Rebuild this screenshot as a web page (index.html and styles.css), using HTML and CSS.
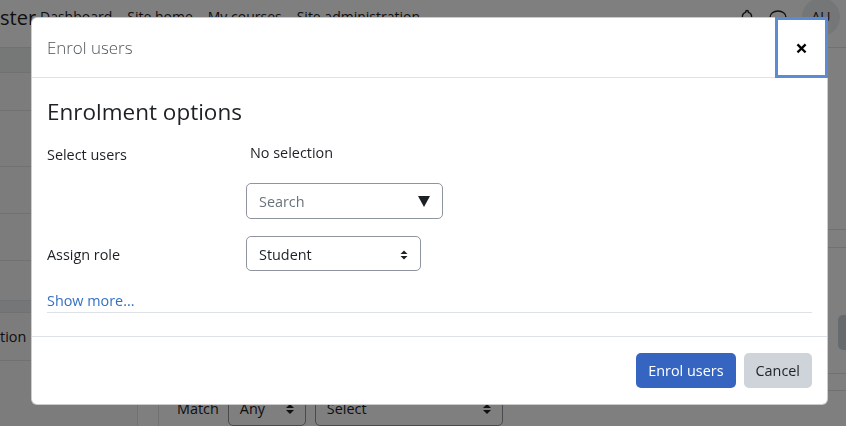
FILE: index.html
```html
<!DOCTYPE html>
<html lang="en">
<head>
<meta charset="utf-8">
<title>Enrol users</title>
<link rel="stylesheet" href="styles.css">
</head>
<body>
<div class="page">
  <header class="navbar">
    <span class="brand">ster</span>
    <nav class="primary-nav">
      <a href="#">Dashboard</a>
      <a href="#">Site home</a>
      <a href="#">My courses</a>
      <a href="#">Site administration</a>
    </nav>
    <div class="nav-icons">
      <svg class="nav-icon" width="14" height="18" viewBox="0 0 14 18"><path d="M7 1.5a1.3 1.3 0 0 1 1.3 1.3v.5A4.6 4.6 0 0 1 11.6 7.8v4l1.6 2.2H.8l1.6-2.2v-4A4.6 4.6 0 0 1 5.7 3.3v-.5A1.3 1.3 0 0 1 7 1.5z" fill="none" stroke="#1d2125" stroke-width="1.4"/></svg>
      <svg class="nav-icon" width="20" height="18" viewBox="0 0 20 18"><path d="M10 2c4.4 0 8 2.7 8 6.2s-3.6 6.2-8 6.2c-1 0-2-.1-2.9-.4L3 16l1.2-3.5C2.8 11.4 2 9.9 2 8.2 2 4.7 5.6 2 10 2z" fill="none" stroke="#1d2125" stroke-width="1.4"/></svg>
      <span class="avatar">AU</span>
    </div>
  </header>
  <div class="page-body">
    <aside class="drawer">
      <div class="drow r1"></div>
      <div class="drow r2"></div>
      <div class="drow r3"></div>
      <div class="drow r4"></div>
      <div class="drow r5"></div>
      <div class="drow r6"></div>
      <div class="drow r7"></div>
      <div class="drow r8">tion</div>
    </aside>
    <div class="gutter"></div>
    <main class="content">
      <div class="cblock ca"></div>
      <div class="cblock cb"></div>
      <div class="cblock cc"><span class="side-btn"></span></div>
      <div class="cblock cd"></div>
      <div class="filter-row">
        <span class="filter-label">Match</span>
        <span class="bg-select any">Any<svg width="8" height="10" viewBox="0 0 8 10"><path d="M4 0l4 4H0zM4 10l4-4H0z" fill="#1d2125"/></svg></span>
        <span class="bg-select sel">Select<svg width="8" height="10" viewBox="0 0 8 10"><path d="M4 0l4 4H0zM4 10l4-4H0z" fill="#1d2125"/></svg></span>
      </div>
    </main>
  </div>
</div>

<div class="backdrop"></div>

<div class="modal" role="dialog" aria-labelledby="modal-title">
  <div class="modal-header">
    <h5 class="modal-title" id="modal-title">Enrol users</h5>
    <button class="close-btn" aria-label="Close">×</button>
  </div>
  <div class="modal-body">
    <h3 class="section-title">Enrolment options</h3>
    <div class="form-grid">
      <label class="form-label label-top">Select users</label>
      <div class="field">
        <div class="selection-text">No selection</div>
        <div class="autocomplete">
          <span class="placeholder">Search</span>
          <svg width="12" height="11" viewBox="0 0 12 11"><path d="M0 0h12L6 11z" fill="#1d2125"/></svg>
        </div>
      </div>
      <label class="form-label label-center">Assign role</label>
      <div class="field">
        <div class="custom-select">
          <span>Student</span>
          <svg width="8" height="10" viewBox="0 0 8 10"><path d="M4 0.5l3.5 3.5H0.5zM4 9.5l3.5-3.5H0.5z" fill="#1d2125"/></svg>
        </div>
      </div>
    </div>
    <div class="show-more"><a href="#">Show more...</a></div>
  </div>
  <div class="modal-footer">
    <button class="btn btn-primary">Enrol users</button>
    <button class="btn btn-secondary">Cancel</button>
  </div>
</div>
</body>
</html>
```

FILE: styles.css
```css
* { box-sizing: border-box; }

html, body { margin: 0; padding: 0; }

body {
  width: 846px;
  height: 426px;
  overflow: hidden;
  position: relative;
  font-family: "Open Sans", "Noto Sans", sans-serif;
  font-size: 14.4px;
  line-height: 22px;
  color: #1d2125;
  background: #fff;
}

/* ---------- background page ---------- */
.page {
  height: 426px;
  display: flex;
  flex-direction: column;
}

.navbar {
  height: 48px;
  flex: none;
  display: flex;
  align-items: flex-start;
  padding-top: 6px;
  border-bottom: 1px solid #dee2e6;
}

.brand {
  font-size: 20px;
  line-height: 24px;
  width: 40px;
  flex: none;
}

.primary-nav {
  display: flex;
  gap: 15px;
  font-size: 14px;
}

.primary-nav a {
  color: #1d2125;
  text-decoration: none;
}

.nav-icons {
  margin-left: auto;
  display: flex;
  align-items: center;
  gap: 14px;
  margin-top: -6px;
  padding-right: 6px;
}

.nav-icon { display: block; }

.avatar {
  width: 38px;
  height: 38px;
  border-radius: 50%;
  background: #e9ecef;
  display: flex;
  align-items: center;
  justify-content: center;
  font-size: 14px;
  margin-top: -2px;
}

.page-body {
  flex: 1;
  display: flex;
}

.drawer {
  width: 138px;
  flex: none;
  background: #f8f9fa;
  border-right: 1px solid #dee2e6;
  display: flex;
  flex-direction: column;
}

.drow { border-bottom: 1px solid #dee2e6; flex: none; }
.r1 { height: 25px; background: #eceeef; }
.r2 { height: 38px; }
.r3 { height: 56px; }
.r4 { height: 47px; }
.r5 { height: 47px; }
.r6 { height: 40px; }
.r7 { height: 12px; background: #e9ecef; }
.r8 { height: 48px; display: flex; align-items: center; }

.gutter {
  width: 21px;
  flex: none;
  border-right: 1px solid #dee2e6;
}

.content {
  flex: 1;
  display: flex;
  flex-direction: column;
}

.cblock { border-bottom: 1px solid #dee2e6; flex: none; }
.ca { height: 182px; }
.cb { height: 18px; }
.cc {
  height: 126px;
  display: flex;
  justify-content: flex-end;
  align-items: flex-start;
  padding-top: 67px;
}
.cd { height: 17px; }

.side-btn {
  width: 8px;
  height: 35px;
  background: #ced4da;
  border-radius: 5px 0 0 5px;
}

.filter-row {
  display: flex;
  align-items: center;
  height: 35px;
  padding-left: 18px;
}

.filter-label { margin-right: 9px; }

.bg-select {
  height: 35px;
  border: 1px solid #8f959e;
  border-radius: 5px;
  display: flex;
  align-items: center;
  justify-content: space-between;
  padding: 0 11px;
}
.bg-select.any { width: 78px; margin-right: 9px; }
.bg-select.sel { width: 188px; }

.backdrop {
  position: fixed;
  inset: 0;
  background: rgba(0, 0, 0, 0.5);
}

/* ---------- modal ---------- */
.modal {
  position: absolute;
  left: 31px;
  top: 17px;
  width: 797px;
  background: #fff;
  border: 1px solid rgba(0, 0, 0, 0.2);
  border-radius: 6px;
  display: flex;
  flex-direction: column;
}

.modal-header {
  display: flex;
  align-items: center;
  padding: 15px;
  height: 60px;
  border-bottom: 1px solid #dee2e6;
}

.modal-title {
  margin: 0;
  font-size: 16.9px;
  line-height: 29px;
  font-weight: 300;
  color: #4f5357;
}

.close-btn {
  margin: -16px -16px -16px auto;
  width: 53px;
  height: 61px;
  border: 0;
  background: transparent;
  box-shadow: inset 0 0 0 3px #5b8bd3;
  font-family: "Open Sans", sans-serif;
  font-size: 22px;
  font-weight: 700;
  line-height: 1;
  color: #000;
  padding: 0 0 1px 0;
  cursor: pointer;
}

.modal-body {
  padding: 15px 15px 24px;
}

.section-title {
  margin: 5px 0 0;
  font-size: 22.5px;
  line-height: 28px;
  font-weight: 400;
  color: #1d2125;
}

.form-grid {
  margin-top: 16px;
  display: grid;
  grid-template-columns: 199px 1fr;
  row-gap: 17px;
}

.form-label { line-height: 22px; }
.label-top { padding-top: 2px; }
.label-center { align-self: center; padding-top: 2px; }

.field {
  display: flex;
  flex-direction: column;
  align-items: flex-start;
}

.selection-text {
  padding-left: 4px;
  margin-bottom: 19px;
}

.autocomplete,
.custom-select {
  display: flex;
  align-items: center;
  justify-content: space-between;
  border: 1px solid #8f959e;
  border-radius: 5px;
  padding: 2px 12px 0;
}

.autocomplete {
  width: 197px;
  height: 36px;
}

.autocomplete svg { margin-top: -2px; }

.placeholder { color: #6a737b; }

.custom-select {
  width: 175px;
  height: 35px;
}

.show-more {
  margin-top: 18px;
  padding-top: 1px;
  border-bottom: 1px solid #dee2e6;
}

.show-more a {
  color: #3570c4;
  text-decoration: none;
}

.modal-body { padding-bottom: 23px; }

.modal-footer {
  display: flex;
  justify-content: flex-end;
  gap: 8px;
  padding: 16px 15px;
  border-top: 1px solid #dee2e6;
}

.btn {
  font-family: inherit;
  font-size: 14.4px;
  line-height: 23px;
  padding: 5px 11px;
  border: 1px solid transparent;
  border-radius: 5px;
  cursor: pointer;
}

.btn-primary {
  background: #3565c0;
  color: #fff;
}

.btn-secondary {
  background: #ced4da;
  color: #1d2125;
}
```
